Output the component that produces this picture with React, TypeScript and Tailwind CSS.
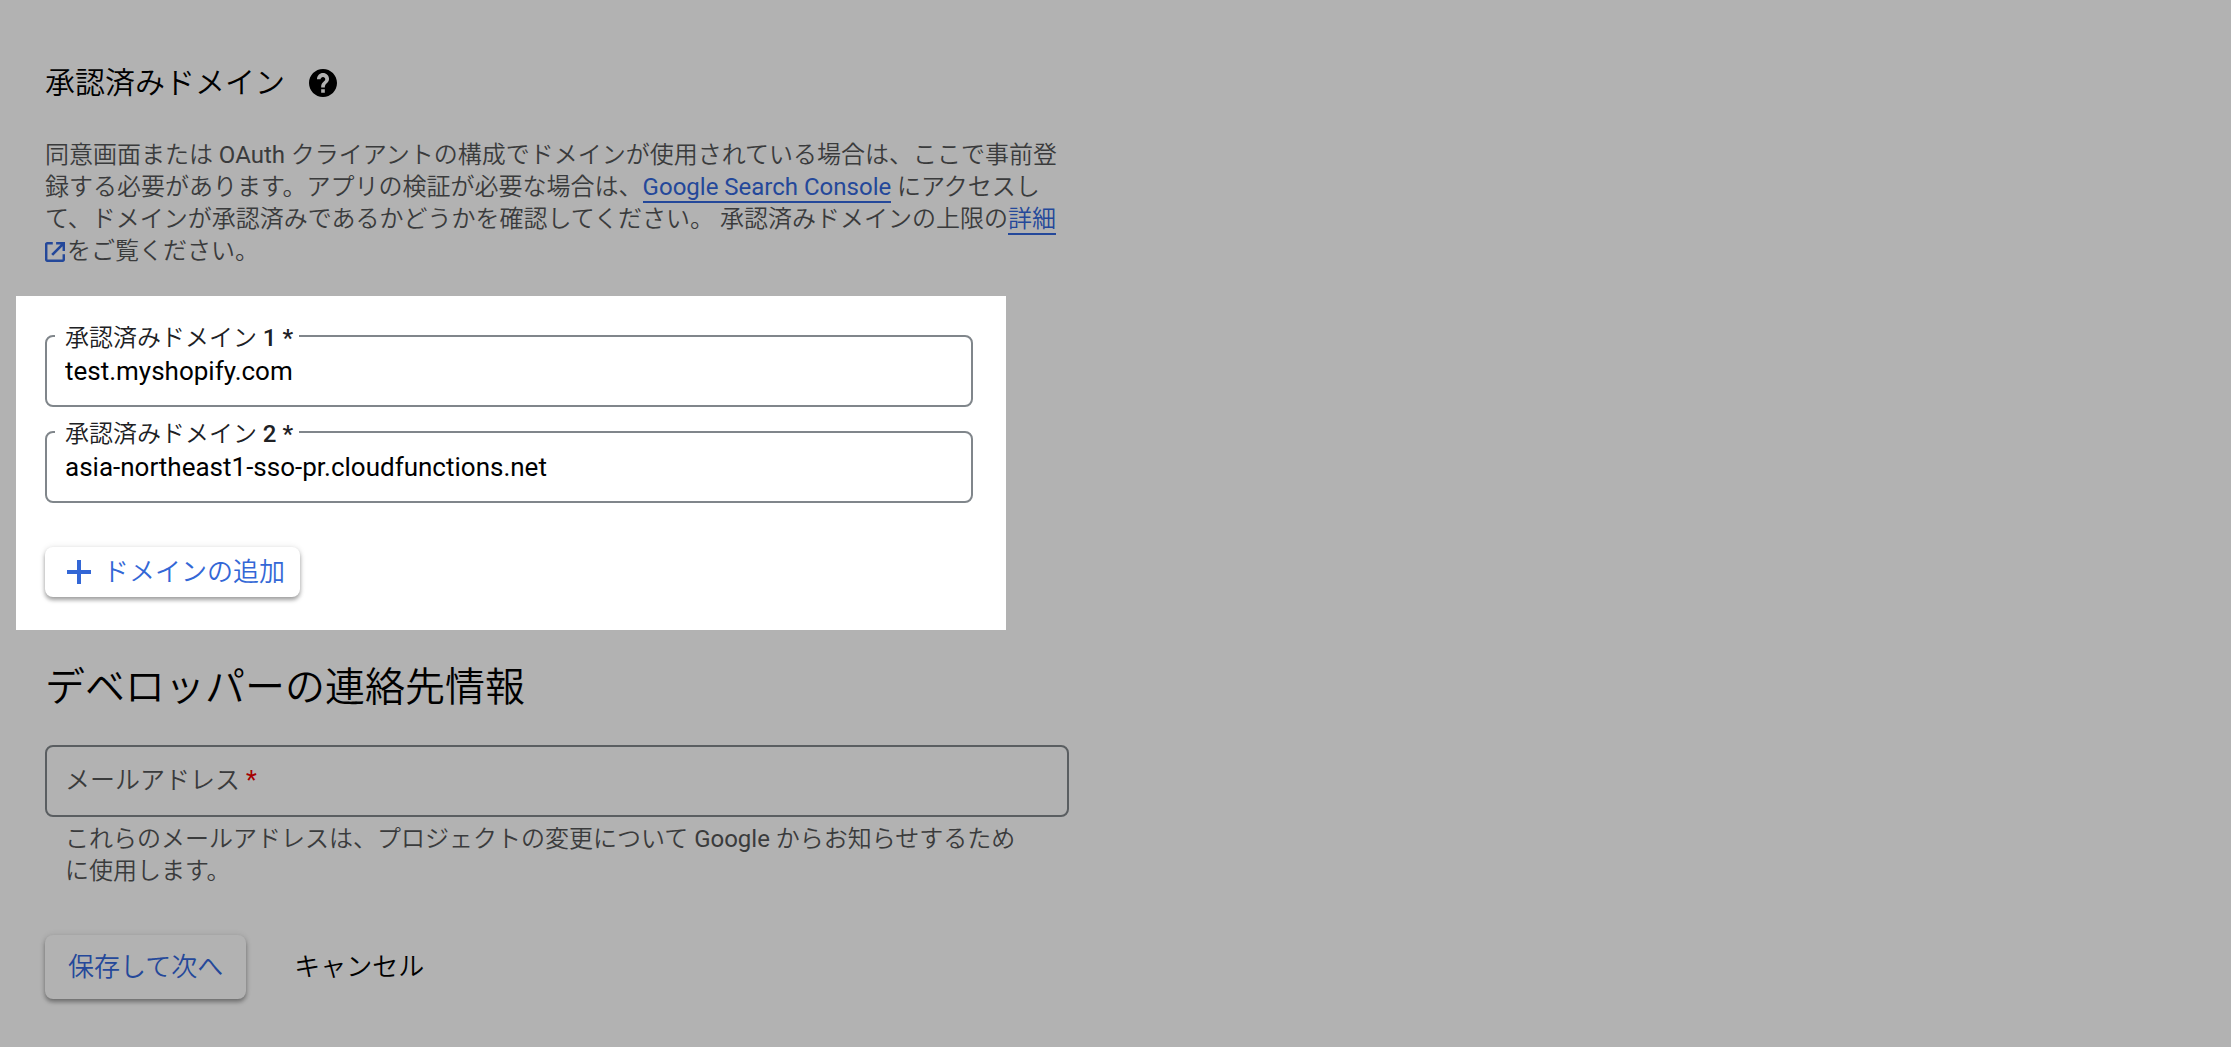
import React from 'react';

const domains = [
  { id: 'domain-1', label: '承認済みドメイン', mark: '1 *', value: 'test.myshopify.com' },
  { id: 'domain-2', label: '承認済みドメイン', mark: '2 *', value: 'asia-northeast1-sso-pr.cloudfunctions.net' },
];

const HelpIcon: React.FC = () => (
  <svg viewBox="2 2 20 20" className="size-7" fill="currentColor" aria-hidden="true">
    <path d="M12 2C6.48 2 2 6.48 2 12s4.48 10 10 10 10-4.48 10-10S17.52 2 12 2zm1.3 17h-2.6v-2.6h2.6V19zm2.1-7.5l-.9.92c-.8.8-1.2 1.4-1.2 2.78h-2.6v-.7c0-1.1.45-2.1 1.17-2.83l1.24-1.26c.3-.3.49-.7.49-1.16 0-.9-.7-1.6-1.6-1.6s-1.7.7-1.7 1.6H7.7C7.7 6.7 9.6 4.8 12 4.8s4.3 1.9 4.3 4.2c0 1-.33 1.9-.9 2.5z" />
  </svg>
);

const OpenInNewIcon: React.FC = () => (
  <svg viewBox="3 3 18 18" className="mr-0.5 inline size-5 align-[-3px]" fill="currentColor" aria-hidden="true">
    <path d="M18.8 18.8H5.2V5.2H10V3H5c-1.11 0-2 .9-2 2v14c0 1.1.89 2 2 2h14c1.1 0 2-.9 2-2v-5h-2.2v4.8zM13 3v2.2h4.1l-8.5 8.5 1.7 1.7L18.8 6.9V11H21V3h-8z" />
  </svg>
);

const PlusIcon: React.FC = () => (
  <svg viewBox="0 0 24 24" className="size-6" fill="currentColor" aria-hidden="true">
    <path d="M10 0h4v10h10v4H14v10h-4V14H0v-4h10z" />
  </svg>
);

const App: React.FC = () => {
  return (
    <main className="min-h-screen bg-[#b2b2b2] px-4 pt-[65px] pb-12 font-[Roboto,'Noto_Sans_CJK_JP',sans-serif] text-2xl/8 font-[350] text-[#3a3b3c]">
      <section>
        <div className="flex items-center gap-6 pl-[29px] text-black">
          <h2 className="text-[30px]/9 font-[350]">承認済みドメイン</h2>
          <button type="button" aria-label="ヘルプ">
            <HelpIcon />
          </button>
        </div>

        <p className="mt-[38px] ml-[29px] max-w-[1016px]">
          同意画面または <span className="font-normal">OAuth</span> クライアントの構成でドメインが使用されている場合は、ここで事前登録する必要があります。アプリの検証が必要な場合は、
          <a href="#search-console" className="border-b-2 border-[#24489a] font-normal text-[#24489a]">Google Search Console</a>
          {' '}にアクセスして、ドメインが承認済みであるかどうかを確認してください。 承認済みドメインの上限の
          <a href="#details" className="text-[#24489a]">
            <span className="border-b-2 border-[#24489a]">詳細</span>
            <OpenInNewIcon />
          </a>
          をご覧ください。
        </p>

        {/* Highlighted domain list */}
        <div className="mt-[29px] max-w-[990px] bg-white pt-[22px] pr-[33px] pb-[33px] pl-[29px] text-black">
          <div className="flex flex-col gap-[7px]">
            {domains.map((domain) => (
              <fieldset key={domain.id} className="h-[89px] min-w-0 rounded-lg border-2 border-[#80868b] px-2">
                <legend className="pt-1 pr-1.5 pl-2.5 text-[#202124]">
                  <label htmlFor={domain.id}>
                    {domain.label} <span className="font-medium">{domain.mark}</span>
                  </label>
                </legend>
                <input
                  id={domain.id}
                  type="text"
                  defaultValue={domain.value}
                  className="block h-[34px] w-full bg-transparent px-2.5 text-[26px] font-normal outline-none"
                />
              </fieldset>
            ))}
          </div>

          <button
            type="button"
            className="mt-11 flex h-[50px] items-center gap-3 rounded-lg bg-white pr-[15px] pl-[22px] text-[26px] text-[#3367d6] shadow-[0_3px_4px_rgba(0,0,0,0.35),0_0_6px_rgba(0,0,0,0.1)]"
          >
            <PlusIcon />
            ドメインの追加
          </button>
        </div>
      </section>

      <section className="mt-[34px] max-w-[1053px] pl-[29px]">
        <h1 className="text-[40px]/[48px] font-[350] text-black">デベロッパーの連絡先情報</h1>

        <div className="relative mt-[33px] h-[72px]">
          <input
            id="email"
            type="email"
            required
            placeholder=" "
            className="peer size-full rounded-lg border-2 border-[#5a5e61] bg-transparent px-[18px] text-[26px] font-normal text-black outline-none"
          />
          <label
            htmlFor="email"
            className="pointer-events-none absolute inset-0 hidden items-center gap-1.5 px-5 text-[25px] peer-placeholder-shown:flex"
          >
            メールアドレス <span className="font-normal text-[#a50000]">*</span>
          </label>
        </div>
        <p className="mt-1.5 pr-12 pl-5">
          これらのメールアドレスは、プロジェクトの変更について <span className="font-normal">Google</span> からお知らせするために使用します。
        </p>

        <div className="mt-12 flex items-center gap-6 text-[26px]">
          <button
            type="button"
            className="h-16 rounded-lg bg-[#b2b2b2] px-[23px] text-[#24489a] shadow-[0_3px_4px_rgba(0,0,0,0.35),0_0_6px_rgba(0,0,0,0.1)]"
          >
            保存して次へ
          </button>
          <button type="button" className="h-16 px-6 text-black">
            キャンセル
          </button>
        </div>
      </section>
    </main>
  );
};

export default App;
